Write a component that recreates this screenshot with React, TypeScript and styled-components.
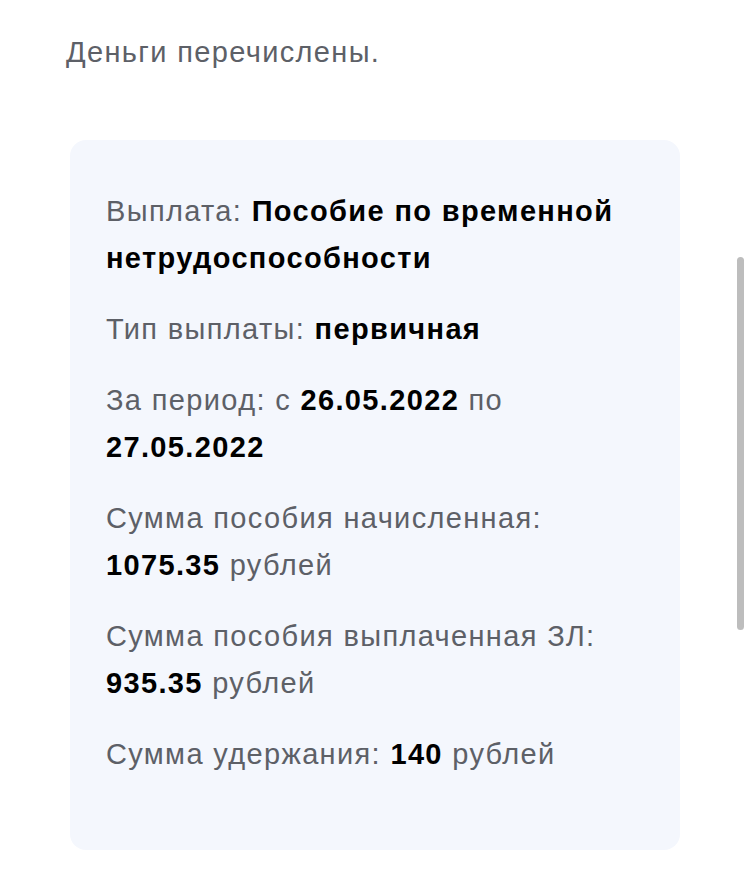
import React from "react";
import styled, { createGlobalStyle } from "styled-components";

const Global = createGlobalStyle`
  html, body { margin: 0; padding: 0; background: #ffffff; }
  body { font-family: "Liberation Sans", Arial, sans-serif; }
`;

const Page = styled.div`
  position: relative;
  width: 749px;
  height: 870px;
  overflow: hidden;
  box-sizing: border-box;
  padding: 36px 69px 0 66px;
`;

const Lead = styled.p`
  margin: 0 0 72px;
  font-size: 29px;
  letter-spacing: 1.35px;
  line-height: 32px;
  color: #5d6067;
`;

const Card = styled.section`
  margin-left: 4px;
  width: 610px;
  height: 710px;
  box-sizing: border-box;
  background: #f4f7fd;
  border-radius: 16px;
  padding: 48px 30px 40px 36px;
  display: flex;
  flex-direction: column;
  gap: 24px;
`;

const Row = styled.p`
  margin: 0;
  font-size: 29px;
  letter-spacing: 1.35px;
  line-height: 47px;
  color: #5d6067;
`;

const Strong = styled.b`
  font-weight: 700;
  color: #000000;
`;

const Scrollbar = styled.div`
  position: absolute;
  right: 5px;
  top: 257px;
  width: 7px;
  height: 373px;
  border-radius: 4px;
  background: #bdbdbd;
`;

export default function App() {
  return (
    <>
      <Global />
      <Page>
        <Lead>Деньги перечислены.</Lead>
        <Card>
          <Row>
            Выплата: <Strong>Пособие по временной нетрудоспособности</Strong>
          </Row>
          <Row>
            Тип выплаты: <Strong>первичная</Strong>
          </Row>
          <Row>
            За период: с <Strong>26.05.2022</Strong> по <Strong>27.05.2022</Strong>
          </Row>
          <Row>
            Сумма пособия начисленная: <Strong>1075.35</Strong> рублей
          </Row>
          <Row>
            Сумма пособия выплаченная ЗЛ: <Strong>935.35</Strong> рублей
          </Row>
          <Row>
            Сумма удержания: <Strong>140</Strong> рублей
          </Row>
        </Card>
        <Scrollbar />
      </Page>
    </>
  );
}
